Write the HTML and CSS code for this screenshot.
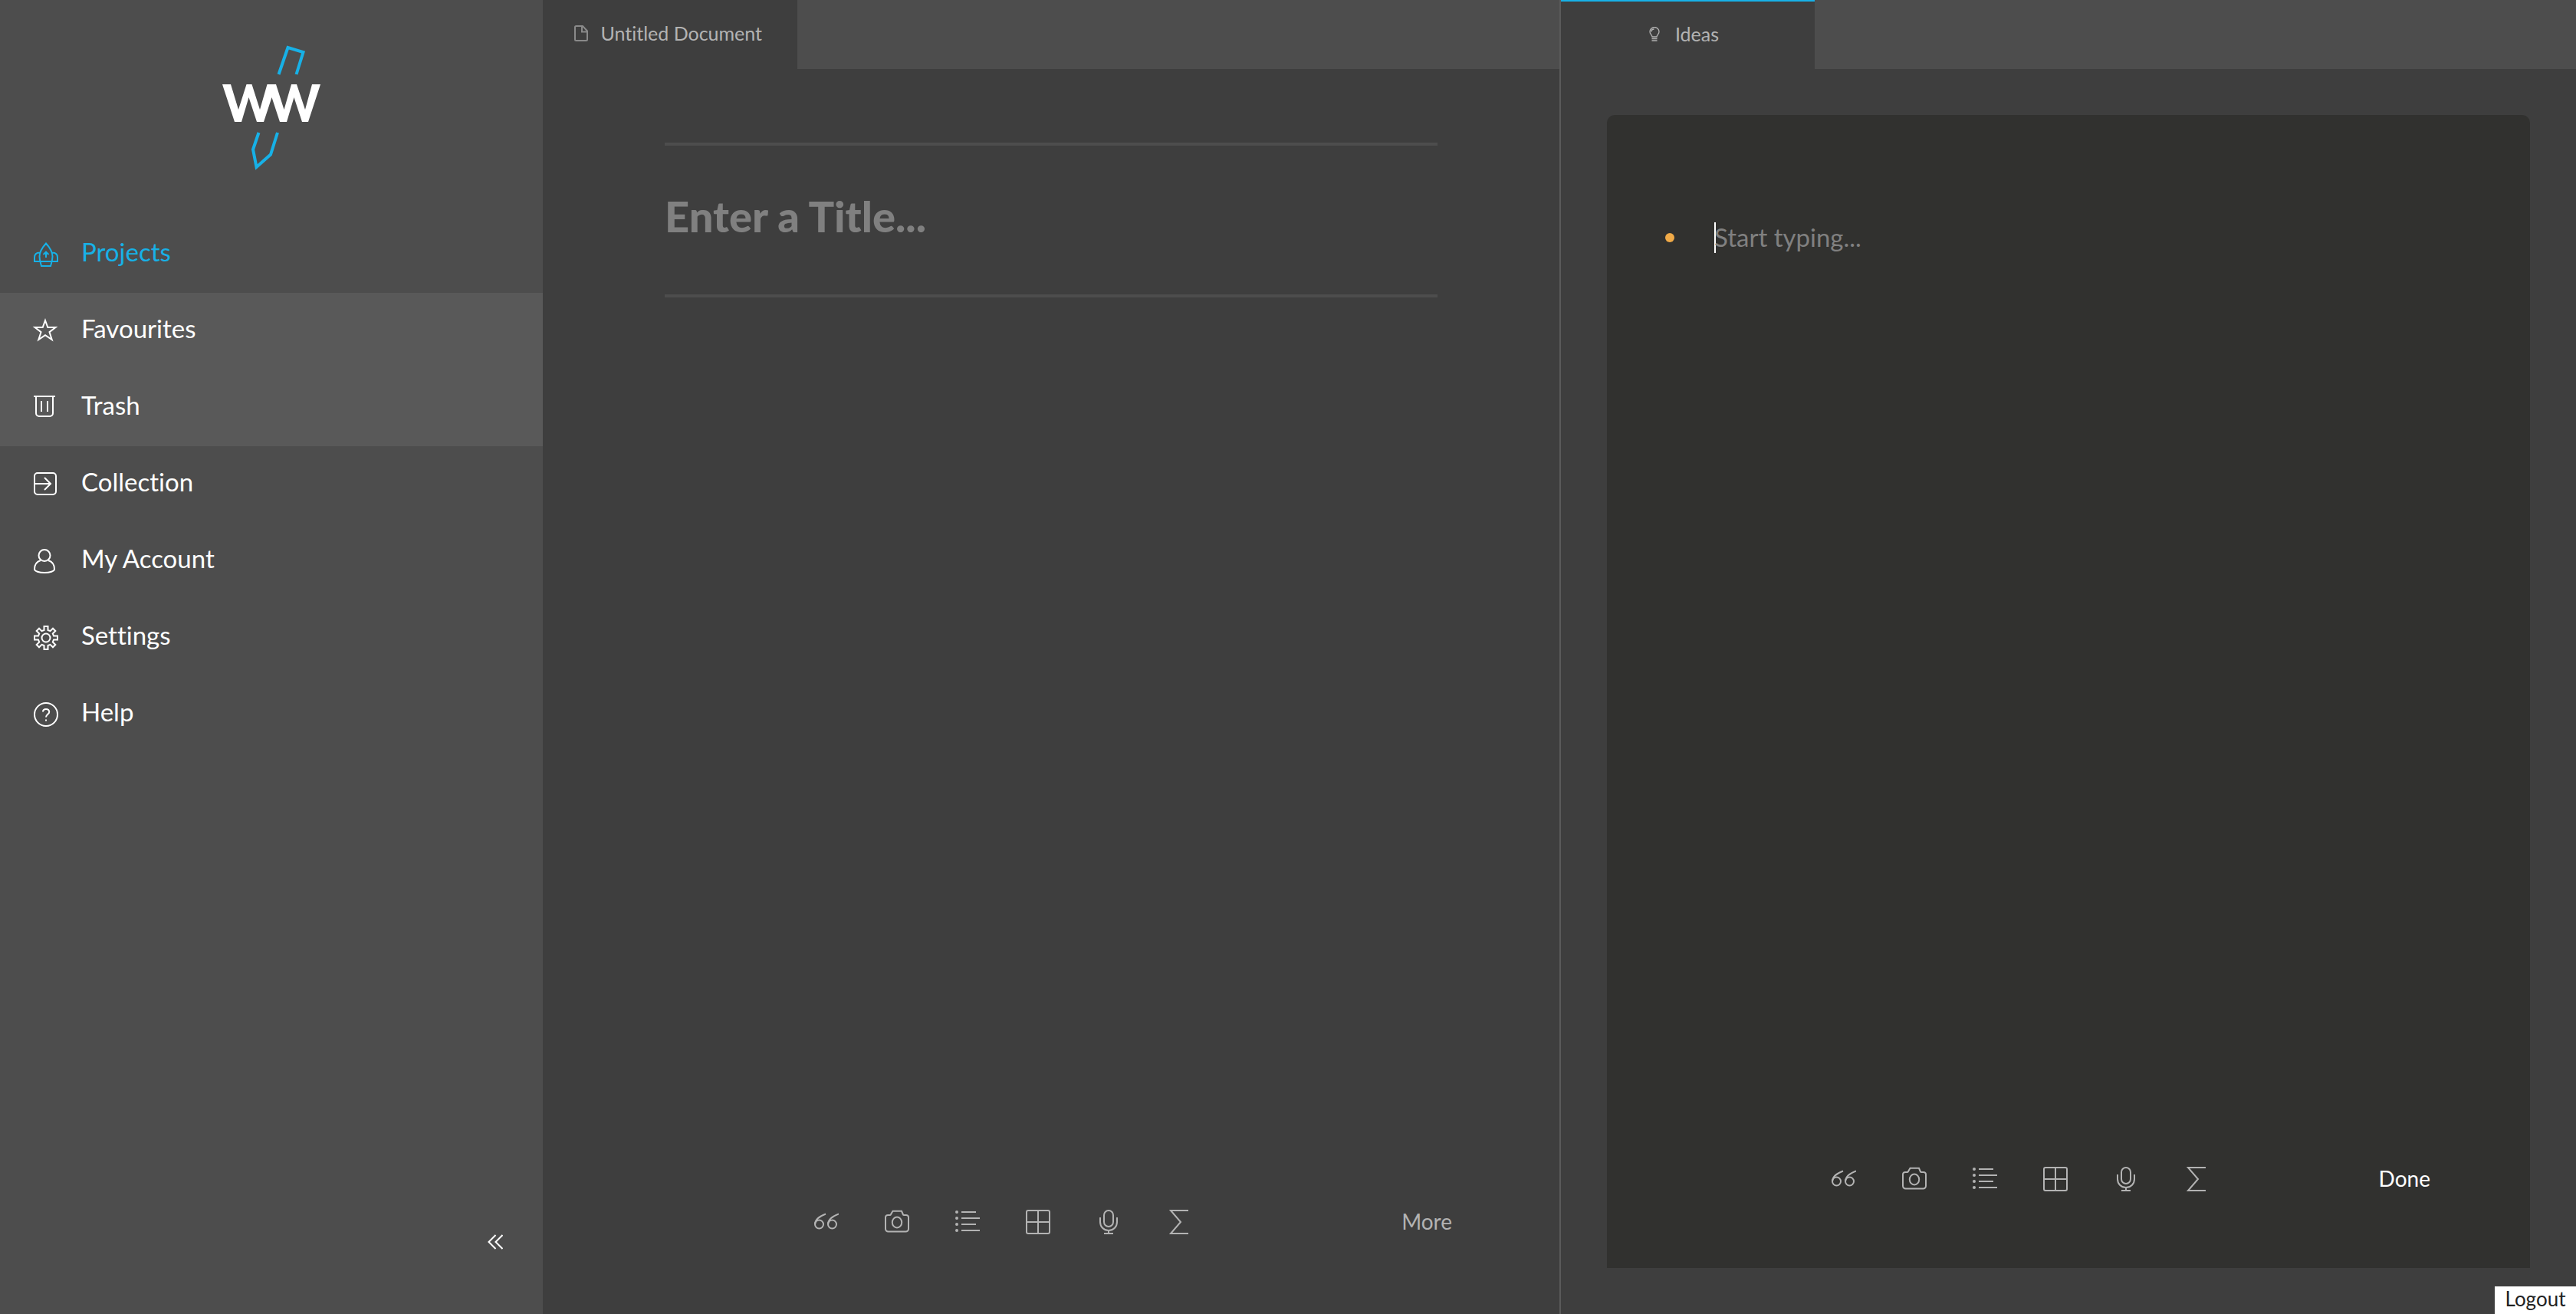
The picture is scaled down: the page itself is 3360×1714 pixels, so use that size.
FILE: index.html
```html
<!DOCTYPE html>
<html lang="en">
<head>
<meta charset="utf-8">
<title>WW – Untitled Document</title>
<link rel="stylesheet" href="styles.css">
</head>
<body>
<svg class="sprite" aria-hidden="true">
  <symbol id="i-quote" viewBox="0 0 32 32"><circle cx="6.500" cy="19" r="5.500"/><path d="M1 19C1 12.500 7 8.500 15 5.500"/><circle cx="23.500" cy="19" r="5.500"/><path d="M18 19C18 12.500 24 8.500 32 5.500"/></symbol>
  <symbol id="i-camera" viewBox="0 0 32 32"><path d="M10.500 1.800h11.500l1.800 4.200c.3.700.8.900 1.500.9h2.700a3 3 0 0 1 3 3V25a3.500 3.500 0 0 1-3.500 3.500h-23A3.500 3.500 0 0 1 1 25V9.900a3 3 0 0 1 3-3h2.500c.7 0 1.200-.2 1.500-.9z"/><ellipse cx="16" cy="16.500" rx="6.200" ry="7"/></symbol>
  <symbol id="i-list" viewBox="0 0 32 32"><path d="M8 3h19M8 11h24M8 19h19M8 27h24"/><path class="dots" d="M2 3h0M2 11h0M2 19h0M2 27h0"/></symbol>
  <symbol id="i-table" viewBox="0 0 32 32"><rect x="1" y="1" width="30" height="30" rx="2"/><path d="M16 1v30M1 16h30"/></symbol>
  <symbol id="i-mic" viewBox="0 0 32 32"><rect x="10" y="1" width="12" height="21" rx="6"/><path d="M5 10v6c0 6 4.500 11 11 11s11-5 11-11v-6M16 27v4M10 31h12"/></symbol>
  <symbol id="i-sum" viewBox="0 0 32 32"><path d="M28 1H5l13 15L5 31h23"/></symbol>
</svg>

<div class="app">
  <aside class="sidebar">
    <svg class="logo" viewBox="0 0 132 166" role="img" aria-label="WW">
      <path class="pencil" d="M73.500 39 85.500 4 105.500 10 96.500 39M47.500 115 40 137 44.500 160 63 143.500 72 115"/>
      <path class="mark" d="M0 52h11l10 33 10.500-33h7l10.500 33L58.500 52H70l10.500 33L90 52h7l11 33L117 52h11l-16 49h-8L93.500 69 84 101h-9L64.500 69 54 101h-9L34.500 69 25 101h-9z"/>
    </svg>
    <nav class="menu">
      <a class="item current" href="#projects"><svg class="icon"><path d="M16 1.500C11 7 7.500 13 7.500 18.500c0 5 1.500 9 2.500 12.500h12c1-3.500 2.500-7.500 2.500-12.500C24.500 13 21 7 16 1.500zM7.800 13.500C3.500 13.500 1 16 1 20v5h30v-5c0-4-2.500-6.500-6.800-6.500M16 20v-7M12.500 16l3.500-3.300 3.500 3.300"/></svg>Projects</a>
      <a class="item sub" href="#favourites"><svg class="icon"><path d="M15 2l3.300 9H28.500l-8 6.200L23.700 27 15 21.200 6.300 27l3.200-9.800L1.500 11H11.700z"/></svg>Favourites</a>
      <a class="item sub" href="#trash"><svg class="icon"><path d="M0 1h28M3 1v22a4 4 0 0 0 4 4h14a4 4 0 0 0 4-4V1M10 7v14M18 7v14"/></svg>Trash</a>
      <a class="item" href="#collection"><svg class="icon"><rect x="1" y="1" width="28" height="28" rx="4"/><path d="M1 15h21M14 7l8 8-8 8"/></svg>Collection</a>
      <a class="item" href="#account"><svg class="icon"><circle cx="14" cy="8.500" r="7.500"/><path d="M9 15C4 16.500 1 21 1 26.500 1 29 7 31 14 31s13-2 13-4.500C27 21 24 16.500 19 15"/></svg>My Account</a>
      <a class="item" href="#settings"><svg class="icon"><circle cx="16" cy="16" r="5.500"/><path d="M13.500 1h5v5l3 1.200L25 3.700 28.300 7l-3.500 3.500 1.200 3h5v5h-5l-1.200 3 3.500 3.500-3.300 3.300-3.500-3.500-3 1.200v5h-5v-5l-3-1.200L7 28.300 3.700 25l3.500-3.500-1.200-3H1v-5h5l1.200-3L3.700 7 7 3.700l3.500 3.500 3-1.200z"/></svg>Settings</a>
      <a class="item" href="#help"><svg class="icon"><circle cx="16" cy="16" r="15"/><path d="M12 12.500C12 10.500 13.500 9 16 9s4.200 1.500 4.200 3.700c0 3-4.200 3.300-4.200 6.800M16 22.500v2"/></svg>Help</a>
    </nav>
    <button class="collapse" type="button" aria-label="Collapse sidebar"><svg viewBox="0 0 20 20"><path d="M10.500 1 1.500 10l9 9M19.500 1l-9 9 9 9"/></svg></button>
  </aside>

  <main class="pane editor">
    <div class="tabs">
      <button class="tab" type="button"><svg class="doc-icon" viewBox="0 0 18 21"><path d="M1 2.500A1.500 1.500 0 0 1 2.500 1H11l6 6.500v11a1.500 1.500 0 0 1-1.500 1.500h-13A1.500 1.500 0 0 1 1 18.500zM10 1v7.500h7"/></svg>Untitled Document</button>
    </div>
    <div class="sheet">
      <input class="title" type="text" aria-label="Title" placeholder="Enter a Title...">
    </div>
    <div class="toolbar">
      <div class="tools">
        <button type="button" aria-label="Quote"><svg><use href="#i-quote"/></svg></button>
        <button type="button" aria-label="Image"><svg><use href="#i-camera"/></svg></button>
        <button type="button" aria-label="List"><svg><use href="#i-list"/></svg></button>
        <button type="button" aria-label="Table"><svg><use href="#i-table"/></svg></button>
        <button type="button" aria-label="Dictate"><svg><use href="#i-mic"/></svg></button>
        <button type="button" aria-label="Formula"><svg><use href="#i-sum"/></svg></button>
      </div>
      <button class="action" type="button">More</button>
    </div>
  </main>

  <section class="pane ideas">
    <div class="tabs">
      <button class="tab active" type="button"><svg class="bulb-icon" viewBox="0 0 14 19"><path d="M4 13C4 10.500 1 9.500 1 6.500a6 6 0 0 1 12 0c0 3-3 4-3 6.500zM3 6.500C3 4.500 4.500 3 6.500 3M3.500 15.500h7M3.500 18h7"/></svg>Ideas</button>
    </div>
    <div class="card">
      <label class="idea"><span class="bullet"></span><span class="caret"></span><input type="text" aria-label="Idea" placeholder="Start typing..."></label>
      <div class="toolbar">
        <div class="tools">
          <button type="button" aria-label="Quote"><svg><use href="#i-quote"/></svg></button>
          <button type="button" aria-label="Image"><svg><use href="#i-camera"/></svg></button>
          <button type="button" aria-label="List"><svg><use href="#i-list"/></svg></button>
          <button type="button" aria-label="Table"><svg><use href="#i-table"/></svg></button>
          <button type="button" aria-label="Dictate"><svg><use href="#i-mic"/></svg></button>
          <button type="button" aria-label="Formula"><svg><use href="#i-sum"/></svg></button>
        </div>
        <button class="action" type="button">Done</button>
      </div>
    </div>
  </section>
</div>
<button class="logout" type="button">Logout</button>
</body>
</html>
```
FILE: styles.css
```css
* { box-sizing: border-box; }
body {
  margin: 0;
  background: #3e3e3e;
  color: #fff;
  font-family: Lato, sans-serif;
  font-variant-ligatures: none;
}
button, input {
  padding: 0;
  border: 0;
  background: none;
  color: inherit;
  font: inherit;
  font-variant-ligatures: none;
}
svg {
  fill: none;
  stroke: currentColor;
  stroke-width: 2;
}
.sprite { display: none; }
.app {
  display: grid;
  grid-template-columns: 708px 1fr 1fr;
  min-height: 100vh;
}

/* Sidebar */
.sidebar {
  display: flex;
  flex-direction: column;
  background: #4d4d4d;
}
.logo {
  width: 132px;
  height: 166px;
  margin: 58px 0 58px 290px;
}
.pencil { stroke: #17b1e7; stroke-width: 4; }
.mark { fill: #fff; stroke: none; }
.menu { display: flex; flex-direction: column; }
.item {
  display: flex;
  align-items: center;
  gap: 30px;
  height: 100px;
  padding: 0 44px 8px;
  color: #fff;
  font-size: 33px;
  line-height: 40px;
  text-decoration: none;
}
.current { color: #17b1e7; }
.sub { background: #595959; }
.icon {
  width: 32px;
  height: 32px;
  margin-top: 8px;
  overflow: visible;
}
.collapse {
  display: flex;
  align-self: flex-end;
  margin: auto 52px 84px 0;
}
.collapse svg { width: 20px; height: 20px; }

/* Panes */
.pane {
  display: flex;
  flex-direction: column;
  min-width: 0;
}
.ideas { border-left: 2px solid #5a5a5a; }
.tabs {
  display: flex;
  height: 90px;
  background: #4d4d4d;
}
.tab {
  display: flex;
  align-items: center;
  justify-content: center;
  gap: 16px;
  width: 25%;
  padding: 0 4px 4px 0;
  background: #3e3e3e;
  color: #b3b3b3;
  font-size: 25px;
  line-height: 30px;
}
.active {
  gap: 20px;
  padding: 0 10px 4px 0;
  border-top: 2px solid #17b1e7;
}
.doc-icon { width: 18px; height: 21px; color: #8a8a8a; }
.bulb-icon { width: 14px; height: 19px; }
.bulb-icon path { stroke-width: 1.300; }

.sheet { flex: 1; padding: 96px 12% 0; }
.title {
  display: block;
  width: 100%;
  height: 202px;
  padding: 0 0 12px;
  border: solid #4d4d4d;
  border-width: 4px 0;
  font-size: 56px;
  font-weight: 900;
}
input::placeholder { color: #808080; opacity: 1; }

/* Formatting bar */
.toolbar {
  display: grid;
  grid-template-columns: 1fr auto 1fr;
  align-items: center;
}
.tools {
  display: flex;
  grid-column: 2;
  gap: 60px;
  color: #b3b3b3;
}
.tools button { display: flex; }
.tools svg { width: 32px; height: 32px; overflow: visible; }
.dots { stroke-width: 4; stroke-linecap: round; }
.action {
  justify-self: end;
  padding-bottom: 2px;
  font-size: 28px;
  line-height: 34px;
}
.editor .toolbar { padding: 0 140px 102px 14px; color: #b3b3b3; }

/* Ideas card */
.card {
  display: flex;
  flex: 1;
  flex-direction: column;
  justify-content: space-between;
  margin: 60px;
  padding: 140px 130px 98px 76px;
  border-radius: 10px 10px 0 0;
  background: #31312f;
}
.card .toolbar { grid-template-columns: 3fr auto 4fr; }
.idea {
  display: flex;
  align-items: center;
  height: 40px;
  font-size: 33px;
}
.bullet {
  width: 12px;
  height: 12px;
  margin-right: 52px;
  border-radius: 50%;
  background: #f0aa48;
}
.caret { width: 2px; height: 40px; margin-right: -2px; background: #fff; }
.idea input { flex: 1; height: 40px; padding-bottom: 2px; }

.logout {
  position: fixed;
  right: 0;
  bottom: 0;
  width: 106px;
  height: 36px;
  padding-bottom: 4px;
  background: #fff;
  color: #222;
  font-size: 26px;
  line-height: 32px;
}
```
